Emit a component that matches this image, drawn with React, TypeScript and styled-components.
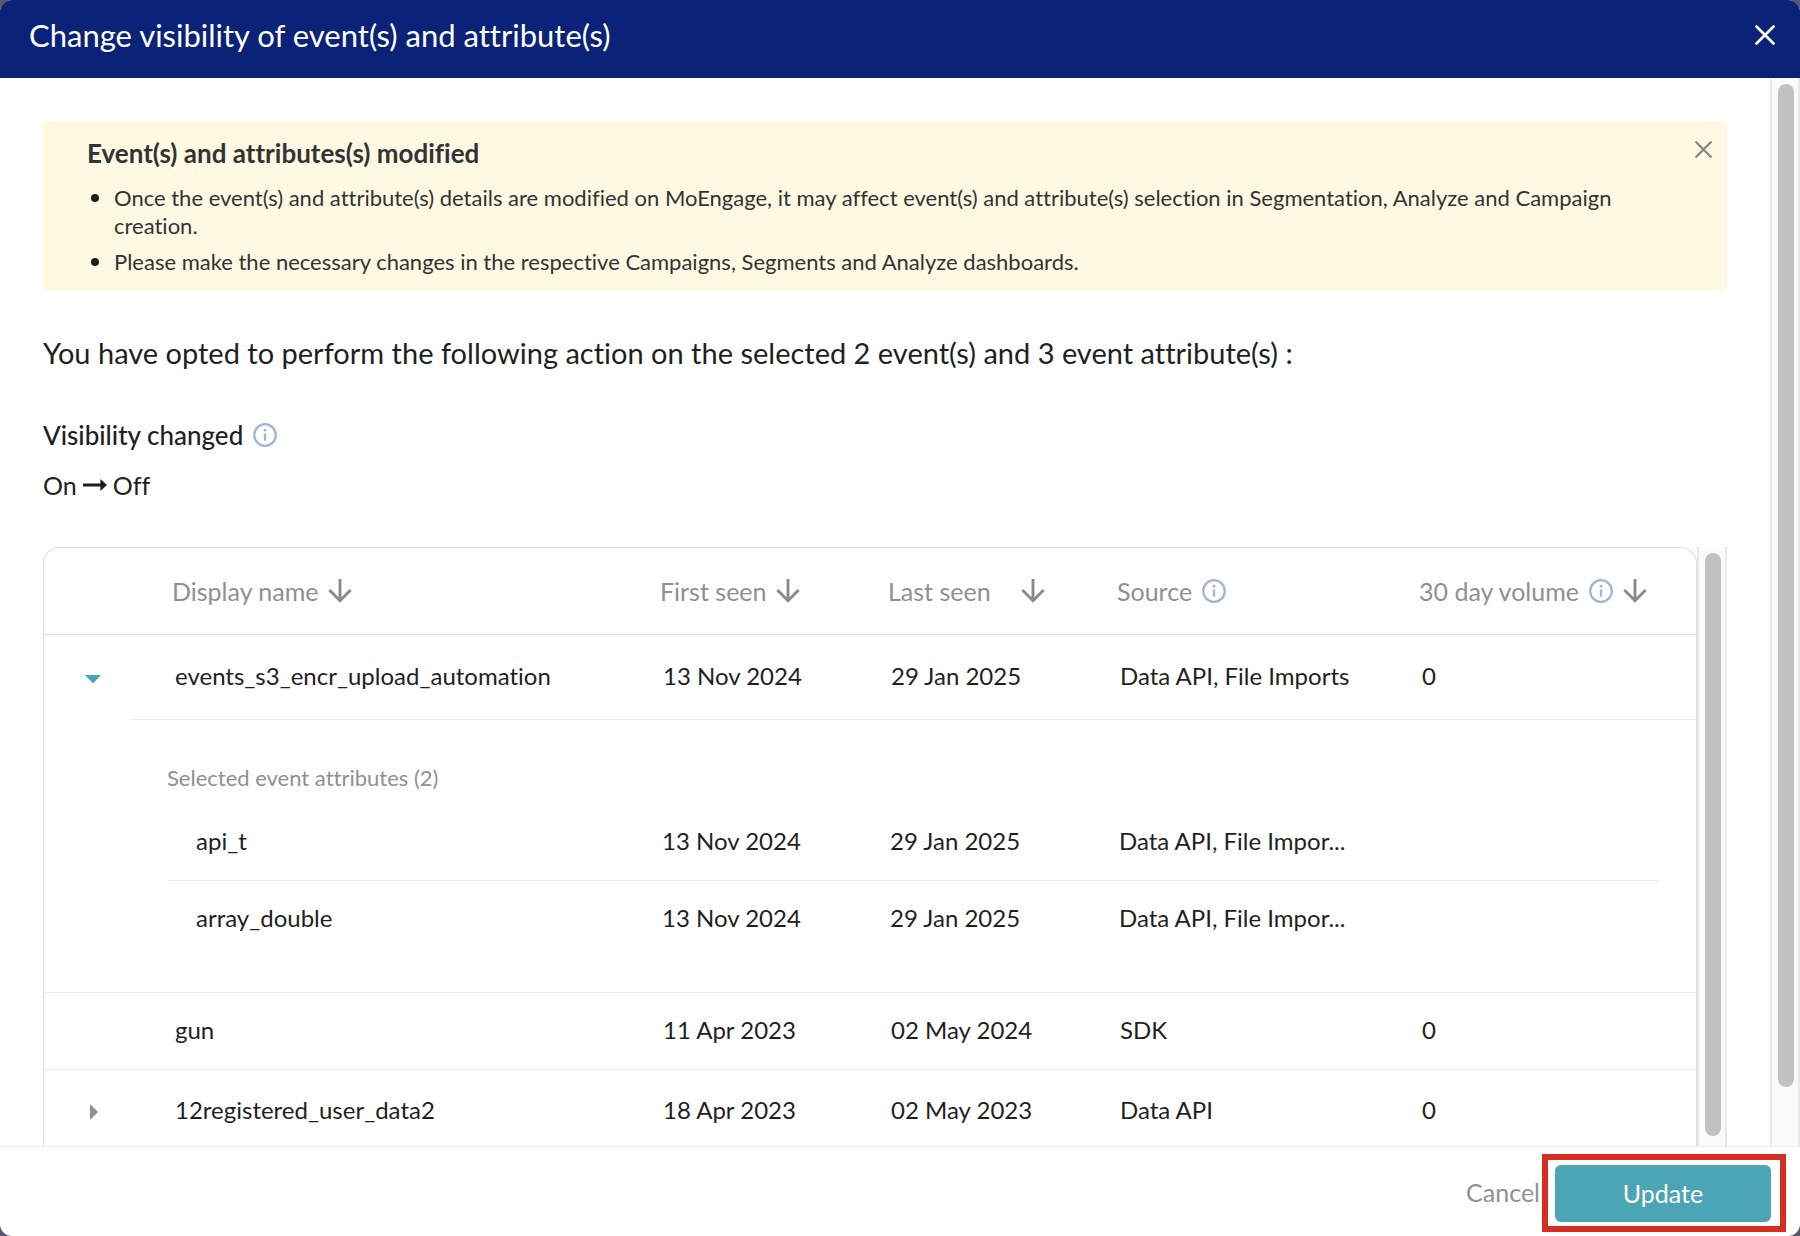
import React, { useState } from 'react';
import styled, { createGlobalStyle, css } from 'styled-components';

const color = {
  backdrop: '#55566b',
  navy: '#0a2278',
  notice: '#fef9e3',
  text: '#1f1f1f',
  noticeText: '#333333',
  muted: '#909090',
  info: '#a3b3d9',
  teal: '#4ca5b5',
  frame: '#d7dbec',
  rule: '#ebebf0',
  mark: '#d62f22',
};

const GlobalStyle = createGlobalStyle`
  *, *::before, *::after { box-sizing: border-box; }
  body {
    margin: 0;
    background: ${color.backdrop};
    color: ${color.text};
    font-family: Lato, 'Open Sans', sans-serif;
    font-variant-ligatures: none;
  }
  button { font: inherit; }
`;

const Dialog = styled.div`
  display: flex;
  flex-direction: column;
  height: 100vh;
  background: #ffffff;
  border-radius: 12px;
  overflow: hidden;
`;

const Header = styled.header`
  display: flex;
  flex: none;
  align-items: center;
  justify-content: space-between;
  height: 78px;
  padding: 0 25px 8px 29px;
  background: ${color.navy};
  color: #ffffff;
`;

const Title = styled.h1`
  margin: 0;
  font-size: 31px;
  line-height: 36px;
  font-weight: 400;
`;

const IconButton = styled.button`
  display: inline-flex;
  flex: none;
  align-items: center;
  justify-content: center;
  padding: 0;
  border: 0;
  background: none;
  color: inherit;
  cursor: pointer;
`;

const Body = styled.div`
  display: flex;
  flex: 1;
  min-height: 0;
  overflow: hidden;
`;

const Content = styled.main`
  display: flex;
  flex: 1;
  flex-direction: column;
  min-width: 0;
  padding: 43px 43px 0;
`;

const Track = styled.div`
  flex: none;
  width: 30px;
  padding: 6px;
  border: solid #e8e8e8;
  border-width: 0 2px;
  background: #fafafa;
`;

const Thumb = styled.div<{ $length: string }>`
  width: 16px;
  height: ${(p) => p.$length};
  border-radius: 8px;
  background: #c1c1c1;
`;

const Notice = styled.section`
  display: flex;
  flex: none;
  align-items: flex-start;
  padding: 16px 12px 15px 44px;
  border-radius: 6px;
  background: ${color.notice};
  color: ${color.noticeText};
`;

const NoticeText = styled.div`
  flex: 1;
  padding-right: 72px;
`;

const NoticeTitle = styled.h2`
  margin: 0 0 15px;
  font-size: 26px;
  line-height: 32px;
  font-weight: 700;
`;

const NoticeList = styled.ul`
  display: flex;
  flex-direction: column;
  gap: 8px;
  margin: 0;
  padding: 0;
  list-style: none;
  font-size: 22px;
  line-height: 28px;
`;

const NoticeItem = styled.li`
  display: flex;
  gap: 15px;
  padding-left: 4px;

  &::before {
    content: '';
    flex: none;
    width: 8px;
    height: 8px;
    margin-top: 10px;
    border-radius: 50%;
    background: ${color.text};
  }
`;

const NoticeClose = styled(IconButton)`
  width: 24px;
  height: 24px;
  color: #868686;
`;

const Intro = styled.p`
  margin: 44px 0 48px;
  font-size: 29px;
  line-height: 36px;
`;

const ChangeTitle = styled.h3`
  display: flex;
  align-items: center;
  gap: 10px;
  margin: 0 0 18px;
  font-size: 26px;
  line-height: 32px;
  font-weight: 500;
`;

const Change = styled.p`
  display: flex;
  align-items: center;
  gap: 6px;
  margin: 0 0 46px;
  font-size: 25px;
  line-height: 32px;
`;

const TableArea = styled.div`
  display: flex;
  flex: 1;
  min-height: 0;
`;

const TableFrame = styled.div`
  flex: 1;
  min-width: 0;
  border: 1px solid ${color.frame};
  border-bottom: 0;
  border-radius: 16px 16px 0 0;
  overflow: hidden;
`;

const Table = styled.table`
  width: 100%;
  table-layout: fixed;
  border-collapse: separate;
  border-spacing: 0;
  font-size: 24px;
  line-height: 28px;
`;

const Col = styled.col<{ $width?: number }>`
  ${(p) => p.$width && css`width: ${p.$width}px;`}
`;

const HeadCell = styled.th`
  height: 87px;
  padding: 0 0 0 41px;
  border-bottom: 1px solid ${color.frame};
  color: ${color.muted};
  font-size: 25px;
  font-weight: 400;
  text-align: left;
  white-space: nowrap;
`;

const HeadLabel = styled.span<{ $gap?: number }>`
  display: flex;
  align-items: center;
  gap: ${(p) => p.$gap ?? 10}px;
`;

const Cell = styled.td<{ $height?: number; $plain?: boolean }>`
  height: ${(p) => p.$height ?? 77}px;
  padding: 0 0 2px 44px;
  border-bottom: ${(p) => (p.$plain ? '0' : `1px solid ${color.rule}`)};
  white-space: nowrap;
`;

const ToggleCell = styled(Cell)`
  padding-left: 37px;
`;

const Toggle = styled(IconButton)<{ $open: boolean }>`
  width: 24px;
  height: 24px;
  vertical-align: middle;
  color: ${(p) => (p.$open ? color.teal : color.muted)};
`;

const GroupCell = styled.td`
  padding: 44px 37px 36px 123px;
  border-bottom: 1px solid ${color.rule};
`;

const GroupCaption = styled.caption`
  padding-bottom: 12px;
  color: ${color.muted};
  font-size: 22px;
  line-height: 28px;
  text-align: left;
`;

const AttributeName = styled(Cell)`
  padding-left: 29px;
`;

const Footer = styled.footer`
  display: flex;
  flex: none;
  align-items: center;
  justify-content: flex-end;
  gap: 2px;
  padding: 7px 14px 4px;
  border-top: 1px solid ${color.rule};
  font-size: 25px;
  line-height: 32px;
`;

const FooterButton = styled.button`
  padding: 0 0 2px;
  border: 0;
  background: none;
  color: ${color.muted};
  cursor: pointer;
`;

const Highlight = styled.div`
  padding: 5px 9px 4px 7px;
  border: 6px solid ${color.mark};
`;

const UpdateButton = styled(FooterButton)`
  display: block;
  width: 216px;
  height: 57px;
  border-radius: 6px;
  background: ${color.teal};
  color: #ffffff;
`;

const CloseIcon = ({ size }: { size: number }) => (
  <svg width={size} height={size} viewBox="0 0 18 18" fill="none" stroke="currentColor" strokeWidth="2.4" strokeLinecap="round" aria-hidden="true">
    <path d="M1.3 1.3 16.7 16.7M16.7 1.3 1.3 16.7" />
  </svg>
);

const InfoIcon = () => (
  <svg width="24" height="24" viewBox="0 0 24 24" fill="none" aria-hidden="true">
    <circle cx="12" cy="12" r="10.8" stroke={color.info} strokeWidth="2.3" />
    <circle cx="12" cy="7.2" r="1.4" fill={color.info} />
    <path d="M12 10.4V17.8" stroke={color.info} strokeWidth="2.3" />
  </svg>
);

const SortIcon = () => (
  <svg width="24" height="24" viewBox="0 0 24 24" fill="none" stroke="#8a8a8a" strokeWidth="2.9" aria-hidden="true">
    <path d="M12 0V21.6M1.4 11 12 21.8 22.6 11" />
  </svg>
);

const ChangeArrow = () => (
  <svg width="24" height="12" viewBox="0 0 24 12" aria-hidden="true">
    <path d="M0 4.6H17.4V0L24 6 17.4 12V7.4H0Z" fill={color.text} />
  </svg>
);

const Caret = ({ open }: { open: boolean }) => (
  <svg width="16" height="16" viewBox="0 0 16 16" fill="currentColor" aria-hidden="true">
    <path d={open ? 'M0 4H16L8 12.5Z' : 'M5 0V16L13 8Z'} />
  </svg>
);

type Attribute = { name: string; first: string; last: string; source: string };
type EventRow = Attribute & {
  volume: string;
  height: number;
  expandable?: boolean;
  attributes: Attribute[];
};

const events: EventRow[] = [
  {
    name: 'events_s3_encr_upload_automation',
    first: '13 Nov 2024',
    last: '29 Jan 2025',
    source: 'Data API, File Imports',
    volume: '0',
    height: 85,
    expandable: true,
    attributes: [
      { name: 'api_t', first: '13 Nov 2024', last: '29 Jan 2025', source: 'Data API, File Impor...' },
      { name: 'array_double', first: '13 Nov 2024', last: '29 Jan 2025', source: 'Data API, File Impor...' },
    ],
  },
  {
    name: 'gun',
    first: '11 Apr 2023',
    last: '02 May 2024',
    source: 'SDK',
    volume: '0',
    height: 77,
    attributes: [],
  },
  {
    name: '12registered_user_data2',
    first: '18 Apr 2023',
    last: '02 May 2023',
    source: 'Data API',
    volume: '0',
    height: 82,
    expandable: true,
    attributes: [],
  },
];

const AttributeTable = ({ items }: { items: Attribute[] }) => (
  <Table>
    <GroupCaption>Selected event attributes ({items.length})</GroupCaption>
    <colgroup>
      <Col />
      <Col $width={228} />
      <Col $width={229} />
      <Col $width={302} />
      <Col $width={282} />
    </colgroup>
    <tbody>
      {items.map((item, i) => {
        const plain = i === items.length - 1;
        const height = plain ? 75 : 77;
        return (
          <tr key={item.name}>
            <AttributeName $height={height} $plain={plain}>{item.name}</AttributeName>
            <Cell $height={height} $plain={plain}>{item.first}</Cell>
            <Cell $height={height} $plain={plain}>{item.last}</Cell>
            <Cell $height={height} $plain={plain}>{item.source}</Cell>
            <Cell $height={height} $plain={plain} />
          </tr>
        );
      })}
    </tbody>
  </Table>
);

export default function App() {
  const [open, setOpen] = useState<string | null>(events[0].name);
  const [notice, setNotice] = useState(true);

  return (
    <>
      <GlobalStyle />
      <Dialog role="dialog" aria-labelledby="dialog-title">
        <Header>
          <Title id="dialog-title">Change visibility of event(s) and attribute(s)</Title>
          <IconButton type="button" aria-label="Close">
            <CloseIcon size={20} />
          </IconButton>
        </Header>

        <Body>
          <Content>
            {notice && (
              <Notice>
                <NoticeText>
                  <NoticeTitle>Event(s) and attributes(s) modified</NoticeTitle>
                  <NoticeList>
                    <NoticeItem>
                      Once the event(s) and attribute(s) details are modified on MoEngage, it may affect event(s) and
                      attribute(s) selection in Segmentation, Analyze and Campaign creation.
                    </NoticeItem>
                    <NoticeItem>
                      Please make the necessary changes in the respective Campaigns, Segments and Analyze dashboards.
                    </NoticeItem>
                  </NoticeList>
                </NoticeText>
                <NoticeClose type="button" aria-label="Dismiss" onClick={() => setNotice(false)}>
                  <CloseIcon size={17} />
                </NoticeClose>
              </Notice>
            )}

            <Intro>You have opted to perform the following action on the selected 2 event(s) and 3 event attribute(s) :</Intro>
            <ChangeTitle>
              Visibility changed
              <InfoIcon />
            </ChangeTitle>
            <Change>
              On
              <ChangeArrow />
              Off
            </Change>

            <TableArea>
              <TableFrame>
                <Table>
                  <colgroup>
                    <Col $width={87} />
                    <Col />
                    <Col $width={228} />
                    <Col $width={229} />
                    <Col $width={302} />
                    <Col $width={318} />
                  </colgroup>
                  <thead>
                    <tr>
                      <HeadCell aria-label="Expand" />
                      <HeadCell scope="col"><HeadLabel>Display name<SortIcon /></HeadLabel></HeadCell>
                      <HeadCell scope="col"><HeadLabel>First seen<SortIcon /></HeadLabel></HeadCell>
                      <HeadCell scope="col"><HeadLabel $gap={30}>Last seen<SortIcon /></HeadLabel></HeadCell>
                      <HeadCell scope="col"><HeadLabel>Source<InfoIcon /></HeadLabel></HeadCell>
                      <HeadCell scope="col"><HeadLabel>30 day volume<InfoIcon /><SortIcon /></HeadLabel></HeadCell>
                    </tr>
                  </thead>
                  <tbody>
                    {events.map((event) => {
                      const expanded = open === event.name;
                      return (
                        <React.Fragment key={event.name}>
                          <tr>
                            <ToggleCell $height={event.height} $plain={expanded}>
                              {event.expandable && (
                                <Toggle
                                  type="button"
                                  $open={expanded}
                                  aria-expanded={expanded}
                                  aria-label={`Attributes of ${event.name}`}
                                  onClick={() => setOpen(expanded ? null : event.name)}
                                >
                                  <Caret open={expanded} />
                                </Toggle>
                              )}
                            </ToggleCell>
                            <Cell $height={event.height}>{event.name}</Cell>
                            <Cell $height={event.height}>{event.first}</Cell>
                            <Cell $height={event.height}>{event.last}</Cell>
                            <Cell $height={event.height}>{event.source}</Cell>
                            <Cell $height={event.height}>{event.volume}</Cell>
                          </tr>
                          {expanded && event.attributes.length > 0 && (
                            <tr>
                              <GroupCell colSpan={6}>
                                <AttributeTable items={event.attributes} />
                              </GroupCell>
                            </tr>
                          )}
                        </React.Fragment>
                      );
                    })}
                  </tbody>
                </Table>
              </TableFrame>
              <Track>
                <Thumb $length="calc(100% - 4px)" />
              </Track>
            </TableArea>
          </Content>
          <Track>
            <Thumb $length="95%" />
          </Track>
        </Body>

        <Footer>
          <FooterButton type="button">Cancel</FooterButton>
          <Highlight>
            <UpdateButton type="button">Update</UpdateButton>
          </Highlight>
        </Footer>
      </Dialog>
    </>
  );
}
